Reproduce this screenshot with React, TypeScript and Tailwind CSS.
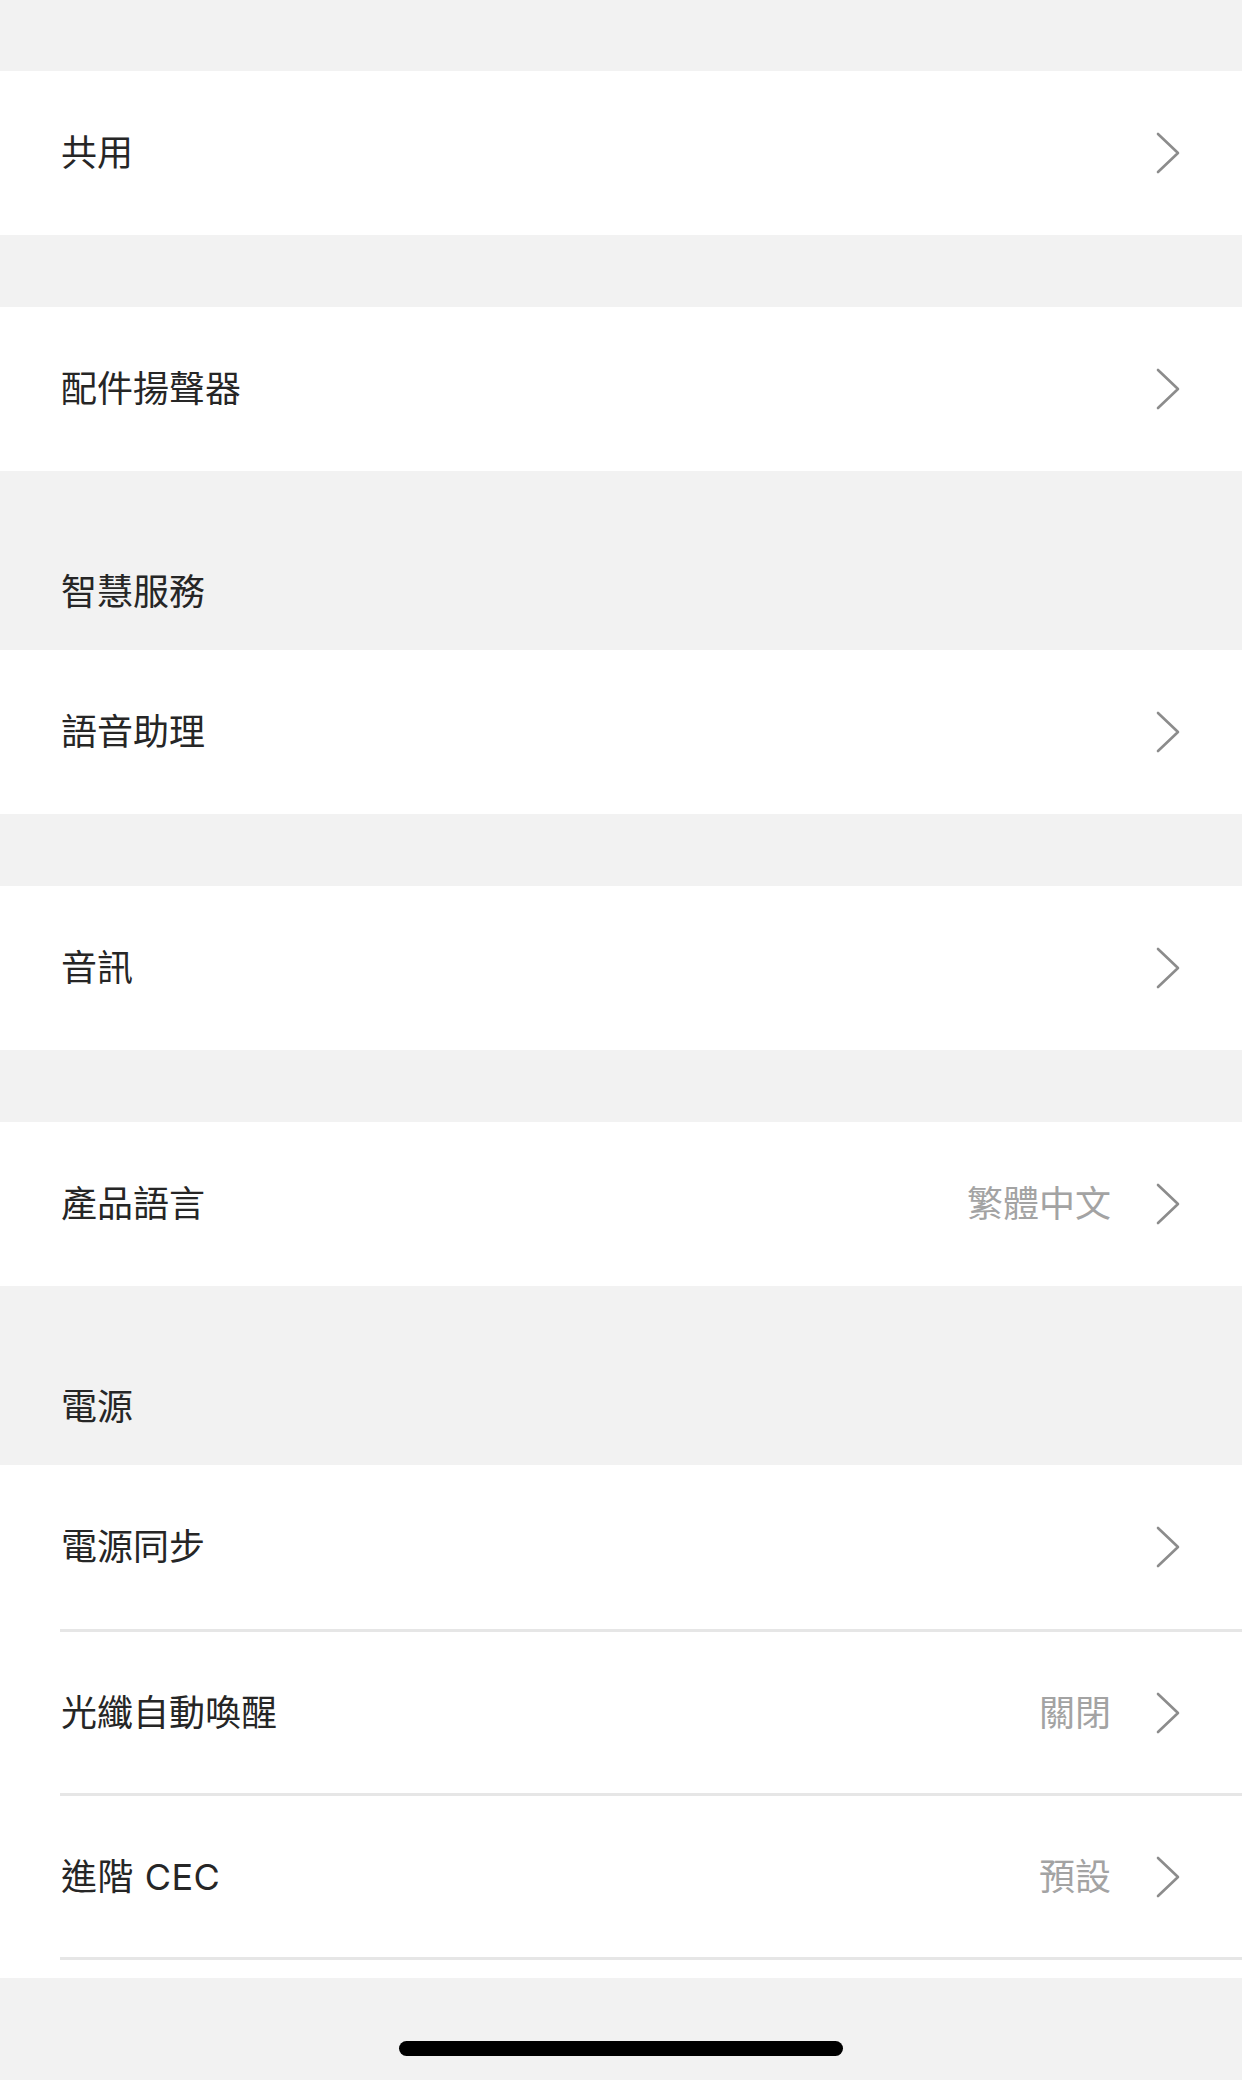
import React from 'react';

type Row = { label: string; value?: string };

const Chevron = () => (
  <svg width="24" height="42" viewBox="0 0 24 42" fill="none" className="shrink-0">
    <polyline points="2,2 22,21 2,40" stroke="#8c8c8c" strokeWidth="2.6" strokeLinecap="round" strokeLinejoin="round" />
  </svg>
);

const SettingRow = ({ label, value }: Row) => (
  <div className="bg-white flex items-center h-[164px] pl-[61px] pr-[62px]">
    <span className="flex-1 text-[36px] leading-[42px] text-[#262626]">{label}</span>
    {value && <span className="text-[36px] leading-[42px] text-[#a3a3a3] mr-[45px]">{value}</span>}
    <Chevron />
  </div>
);

const Spacer = () => <div className="h-[72px] bg-[#f2f2f2]" />;

const SectionHeader = ({ title }: { title: string }) => (
  <div className="h-[179px] bg-[#f2f2f2] flex items-end pl-[61px] pb-[37px]">
    <span className="text-[36px] leading-[42px] text-[#262626]">{title}</span>
  </div>
);

export default function App() {
  return (
    <div
      className="w-[1242px] h-[2080px] bg-[#f2f2f2] flex flex-col overflow-hidden"
      style={{ fontFamily: 'Inter, "Noto Sans CJK TC", sans-serif' }}
    >
      <div className="h-[71px] bg-[#f2f2f2]" />
      <SettingRow label="共用" />
      <Spacer />
      <SettingRow label="配件揚聲器" />
      <SectionHeader title="智慧服務" />
      <SettingRow label="語音助理" />
      <Spacer />
      <SettingRow label="音訊" />
      <Spacer />
      <SettingRow label="產品語言" value="繁體中文" />
      <SectionHeader title="電源" />

      {/* power group */}
      <div className="bg-white pb-[18px]">
        <div className="flex items-center h-[164px] pl-[61px] pr-[62px]">
          <span className="flex-1 text-[36px] leading-[42px] text-[#262626]">電源同步</span>
          <Chevron />
        </div>
        <div className="ml-[60px] h-[3px] bg-[#e6e6e6]" />
        <div className="flex items-center h-[161px] pl-[61px] pr-[62px]">
          <span className="flex-1 text-[36px] leading-[42px] text-[#262626]">光纖自動喚醒</span>
          <span className="text-[36px] leading-[42px] text-[#a3a3a3] mr-[45px]">關閉</span>
          <Chevron />
        </div>
        <div className="ml-[60px] h-[3px] bg-[#e6e6e6]" />
        <div className="flex items-center h-[161px] pl-[61px] pr-[62px]">
          <span className="flex-1 text-[36px] leading-[42px] text-[#262626] tracking-[0.5px]">進階 CEC</span>
          <span className="text-[36px] leading-[42px] text-[#a3a3a3] mr-[45px]">預設</span>
          <Chevron />
        </div>
        <div className="ml-[60px] h-[3px] bg-[#e6e6e6]" />
      </div>

      <div className="flex-1 flex flex-col items-center pt-[63px]">
        <div className="w-[444px] h-[15px] rounded-full bg-black" />
      </div>
    </div>
  );
}
